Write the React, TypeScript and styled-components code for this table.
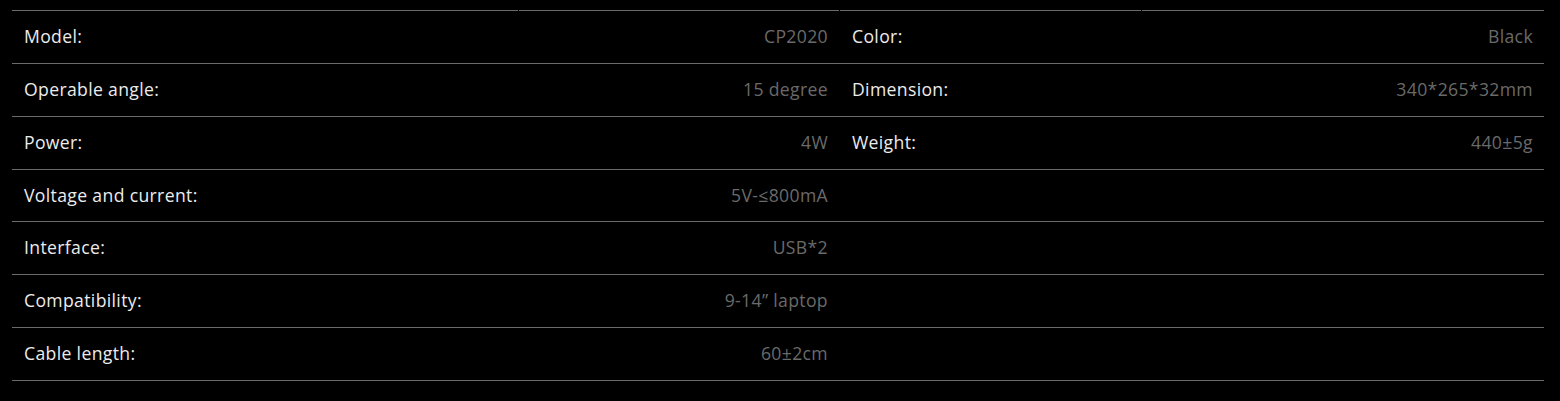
import styled, {createGlobalStyle} from "styled-components";

const GlobalStyle = createGlobalStyle`
  html, body {
    margin: 0;
    padding: 0;
    background: #000;
  }
  body {
    font-family: "Open Sans", Lato, sans-serif;
  }
`;

const Page = styled.div`
  padding: 10px 16px 20px 12px;
  background: #000;
  min-height: 401px;
  box-sizing: border-box;
`;

const Table = styled.div`
  width: 1532px;
  display: flex;
  flex-direction: column;
`;

const Row = styled.div`
  display: grid;
  grid-template-columns: 506px 320px 301px 402px;
  column-gap: 1px;
  height: 52.86px;
  box-sizing: border-box;
  border-bottom: 1px solid #6b6b6b;
  &:first-child {
    height: 53.86px;
  }
`;

const Cell = styled.div<{ $value?: boolean; $head?: boolean }>`
  display: flex;
  align-items: center;
  justify-content: ${p => (p.$value ? "flex-end" : "flex-start")};
  padding: ${p => (p.$value ? "0 11px 2px 0" : "0 0 2px 12px")};
  border-top: ${p => (p.$head ? "1px solid #6b6b6b" : "none")};
  color: ${p => (p.$value ? "#6a6a6a" : "#ececec")};
  font-size: 17.6px;
  letter-spacing: 0.35px;
  white-space: nowrap;
`;

type Spec = [string, string, string?, string?];

const specs: Spec[] = [
  ["Model:", "CP2020", "Color:", "Black"],
  ["Operable angle:", "15 degree", "Dimension:", "340*265*32mm"],
  ["Power:", "4W", "Weight:", "440±5g"],
  ["Voltage and current:", "5V-≤800mA"],
  ["Interface:", "USB*2"],
  ["Compatibility:", "9-14” laptop"],
  ["Cable length:", "60±2cm"],
];

export default function App() {
  return (
    <>
      <GlobalStyle/>
      <Page>
        <Table>
          {specs.map(([l1, v1, l2, v2], i) => (
            <Row key={l1}>
              <Cell $head={i === 0}>{l1}</Cell>
              <Cell $head={i === 0} $value>{v1}</Cell>
              <Cell $head={i === 0}>{l2}</Cell>
              <Cell $head={i === 0} $value>{v2}</Cell>
            </Row>
          ))}
        </Table>
      </Page>
    </>
  );
}
